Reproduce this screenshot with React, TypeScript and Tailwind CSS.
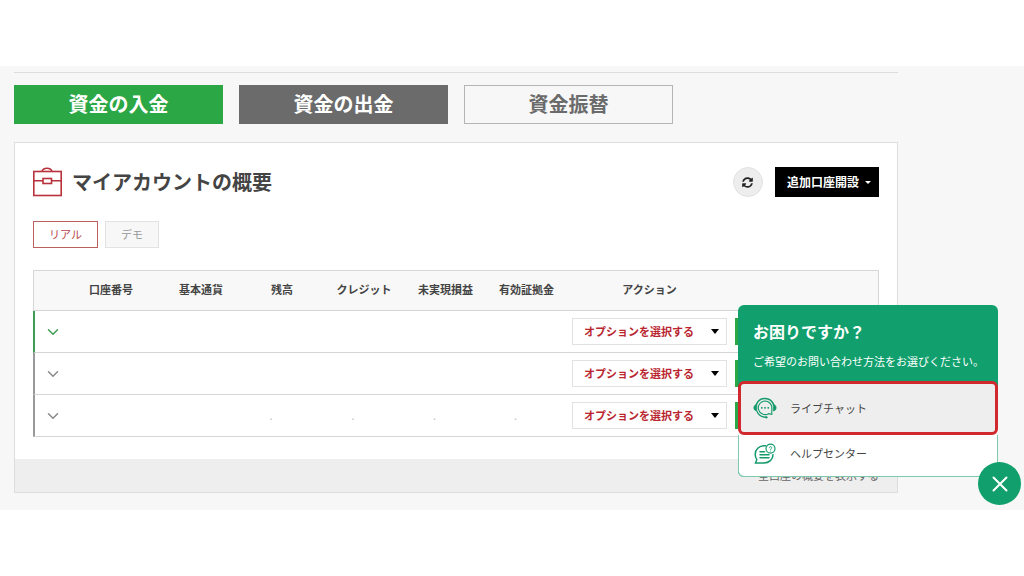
import React from 'react';
import { ChevronDown } from 'lucide-react';
import { FaSyncAlt } from 'react-icons/fa';

type Account = {
  id: number;
  active: boolean;
  values: string[];
};

const headers = [
  { label: '口座番号', width: 'w-[90px]' },
  { label: '基本通貨', width: 'w-[90px]' },
  { label: '残高', width: 'w-[72px]' },
  { label: 'クレジット', width: 'w-[92px]' },
  { label: '未実現損益', width: 'w-[71px]' },
  { label: '有効証拠金', width: 'w-[91px]' },
  { label: 'アクション', width: 'w-[155px]' },
];

const accounts: Account[] = [
  { id: 1, active: true, values: ['', '', '', '', '', ''] },
  { id: 2, active: false, values: ['', '', '', '', '', ''] },
  { id: 3, active: false, values: ['', '', '.', '.', '.', '.'] },
];

const BriefcaseIcon: React.FC = () => (
  <svg width="30" height="30" viewBox="0 0 30 30" fill="none" stroke="#b9313a" strokeWidth="1.6" aria-hidden="true">
    <rect x="0.8" y="4.5" width="27.400" height="24" />
    <path d="M9 4.500C9.500 2.200 11.500 1.200 14 1.200S18.500 2.200 19 4.500" />
    <path d="M0.800 13.800H10M18.500 13.800H28" />
    <rect x="10" y="11.500" width="8.500" height="5" />
  </svg>
);

const LiveChatIcon: React.FC = () => (
  <svg width="24" height="22" viewBox="0 0 24 22" fill="none" stroke="#149a6b" strokeLinecap="round" aria-hidden="true">
    <path d="M3.200 8C4.600 4 8 1.400 12 1.400S19.400 4 20.800 8" strokeWidth="1.500" />
    <path d="M3.300 7.800C1.600 8 1 9.300 1 10.800s.600 2.800 2.300 3Z" fill="#149a6b" strokeWidth="1" />
    <path d="M20.700 7.800c1.700.200 2.300 1.500 2.300 3s-.600 2.800-2.300 3Z" fill="#149a6b" strokeWidth="1" />
    <path d="M12 4a6.800 6.800 0 1 0 3.500 12.700l3.300.600V10.800A6.800 6.800 0 0 0 12 4Z" strokeWidth="1.100" />
    <path d="M4 14.500C5.500 18 8.500 20 12.500 20.200" strokeWidth="1.300" />
    <circle cx="13.300" cy="20.300" r="0.900" fill="#149a6b" strokeWidth="0.600" />
    <path d="M8.800 10.800h.1M12 10.800h.1M15.200 10.800h.1" strokeWidth="1.800" />
  </svg>
);

const HelpCenterIcon: React.FC = () => (
  <svg width="24" height="22" viewBox="0 0 24 22" fill="none" stroke="#149a6b" strokeLinecap="round" aria-hidden="true">
    <path d="M12.500 2.800H11C6 2.800 2.200 6.400 2.200 11.200c0 2 .500 3.700 1.600 5.200L2.500 20H11c5 0 9-3.500 9-8.300" strokeWidth="1.500" />
    <circle cx="17.500" cy="5.600" r="4.500" strokeWidth="1.200" />
    <path d="M16.400 4.700c0-1.500 2.300-1.500 2.300 0 0 .900-1.100.900-1.100 1.800M17.600 8v.1" strokeWidth="0.900" />
    <path d="M7 8.800h4.500M7 11.800h9M7 14.800h9" strokeWidth="1.500" />
  </svg>
);

const AccountRow: React.FC<{ account: Account }> = ({ account }) => (
  <tr className="h-[42px]">
    <td
      className={
        account.active
          ? 'border-b border-l-2 border-b-[#d6d6d6] border-l-[#3f9e56] text-[#3f9e56]'
          : 'border-b border-l-2 border-b-[#d6d6d6] border-l-[#999] text-[#8a8a8a]'
      }
    >
      <button type="button" aria-label="詳細" className="ml-2 flex size-5 items-center justify-center">
        <ChevronDown size={18} strokeWidth={2} />
      </button>
    </td>
    {account.values.map((value, i) => (
      <td key={i} className="border-b border-[#d6d6d6] pr-[22px] text-center text-[#bbb]">
        {value}
      </td>
    ))}
    <td className="border-b border-[#d6d6d6]">
      <div className="relative flex items-center">
        <select
          aria-label="アクション"
          className="h-[27px] w-full appearance-none border border-[#e2e2e2] bg-white pl-[11px] font-bold text-[#b92630]"
        >
          <option>オプションを選択する</option>
        </select>
        <svg width="8" height="5" viewBox="0 0 8 5" className="pointer-events-none absolute right-2" aria-hidden="true">
          <path d="M0 0h8L4 5Z" fill="#000" />
        </svg>
      </div>
    </td>
    <td className="border-r border-b border-[#d6d6d6] px-2">
      <button type="button" aria-label="入金" className="block h-[27px] w-full bg-[#2ba745]" />
    </td>
  </tr>
);

const HelpWidget: React.FC = () => (
  <>
    <div className="absolute right-[26px] bottom-[33px] w-[260px] rounded-md bg-[#109f6d] text-[11px]">
      <div className="px-[15px] pt-4 pb-[10px]">
        <h2 className="text-base leading-5 font-bold text-white">お困りですか？</h2>
        <p className="mt-[10px] leading-5 whitespace-nowrap text-white">ご希望のお問い合わせ方法をお選びください。</p>
      </div>
      <a
        href="#chat"
        className="flex h-[54px] items-center gap-[13px] rounded-md border-[3px] border-[#d0282c] bg-[#eee] px-3 text-[#444] shadow-[0_6px_0_#fff]"
      >
        <LiveChatIcon />
        ライブチャット
      </a>
      <a
        href="#help"
        className="flex h-[42px] items-center gap-[13px] rounded-b-md border border-t-0 border-[#7cc9ac] bg-white px-[14px] pb-1 text-[#444]"
      >
        <HelpCenterIcon />
        ヘルプセンター
      </a>
    </div>
    <button
      type="button"
      aria-label="閉じる"
      className="absolute right-[3px] bottom-[5px] flex size-[43px] items-center justify-center rounded-full bg-[#109f6d]"
    >
      <svg width="16" height="16" viewBox="0 0 16 16" stroke="#fff" strokeWidth="2" strokeLinecap="round" aria-hidden="true">
        <path d="M1.500 1.500l13 13M14.500 1.500l-13 13" />
      </svg>
    </button>
  </>
);

const App: React.FC = () => {
  return (
    <div className="min-h-screen bg-white pt-[66px] font-['Noto_Sans_CJK_JP',sans-serif] text-[#444]">
      <main className="relative bg-[#f7f7f7] pt-[6px] pr-[126px] pb-[17px] pl-[14px]">
        <hr className="border-[#ddd]" />

        {/* Funds */}
        <div className="mt-3 grid grid-cols-4 gap-4 text-xl font-bold">
          <button type="button" className="h-[39px] bg-[#2ba745] pb-[2px] text-white">資金の入金</button>
          <button type="button" className="h-[39px] bg-[#6b6b6b] pb-[2px] text-white">資金の出金</button>
          <button type="button" className="h-[39px] border border-[#b5b5b5] pb-[2px] text-[#6b6b6b]">資金振替</button>
        </div>

        {/* Account overview */}
        <section className="mt-[18px] border border-[#ddd] bg-white">
          <div className="px-[18px] pt-6 pb-[22px]">
            <div className="flex h-[30px] items-center">
              <BriefcaseIcon />
              <h1 className="ml-[9px] text-xl font-bold">マイアカウントの概要</h1>
              <button
                type="button"
                aria-label="更新"
                className="ml-auto flex size-[30px] items-center justify-center rounded-full border border-[#e2e2e2] bg-[#ededed] text-[#222]"
              >
                <FaSyncAlt size={11} />
              </button>
              <button
                type="button"
                className="ml-3 flex h-[30px] items-center gap-[6px] bg-black pr-2 pl-3 text-xs font-bold text-white"
              >
                追加口座開設
                <svg width="6" height="3" viewBox="0 0 6 3" aria-hidden="true">
                  <path d="M0 0h6L3 3Z" fill="#fff" />
                </svg>
              </button>
            </div>

            <div className="mt-6 flex gap-[7px] text-[11px]">
              <button type="button" className="h-[27px] border border-[#b9605f] px-[15px] text-[#b9474a]">リアル</button>
              <button type="button" className="h-[27px] border border-[#e2e2e2] bg-[#f7f7f7] px-[15px] text-[#999]">デモ</button>
            </div>

            <table className="mt-[22px] w-full table-fixed border-separate border-spacing-0 text-[11px]">
              <thead>
                <tr className="h-[41px] bg-[#f8f8f8]">
                  <th className="w-[33px] border-y border-l border-[#d6d6d6]" />
                  {headers.map(({ label, width }) => (
                    <th key={label} className={`border-y border-[#d6d6d6] pb-[2px] ${width}`}>
                      {label}
                    </th>
                  ))}
                  <th className="border-y border-r border-[#d6d6d6]" />
                </tr>
              </thead>
              <tbody>
                {accounts.map((account) => (
                  <AccountRow key={account.id} account={account} />
                ))}
              </tbody>
            </table>
          </div>
          <div className="flex h-[33px] items-center justify-end bg-[#eee] px-[18px] text-[11px]">
            <a href="#all" className="text-[#666]">全口座の概要を表示する</a>
          </div>
        </section>

        <HelpWidget />
      </main>
    </div>
  );
};

export default App;
